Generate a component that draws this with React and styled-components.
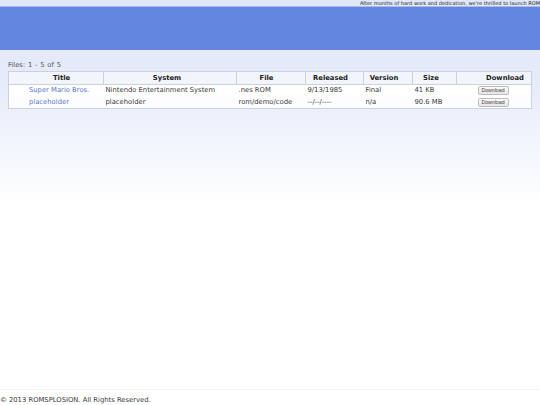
import React from "react";
import styled, { createGlobalStyle } from "styled-components";

const Global = createGlobalStyle`
  html, body { margin: 0; padding: 0; background: #fff; }
  body { font-family: "DejaVu Sans", Verdana, sans-serif; color: #333; }
  #root { width: 540px; height: 405px; overflow: hidden; }
`;
const Page = styled.div`
  width: 540px; height: 405px; display: flex; flex-direction: column; overflow: hidden;
  background: linear-gradient(to bottom, #e0e7f8 0px, #e6ebfa 80px, #ffffff 205px, #ffffff 100%);
`;
const Ticker = styled.div`
  height: 6px; line-height: 6px; font-size: 5.05px; color: #222; white-space: nowrap;
  padding-left: 360px; flex: none;
`;
const Banner = styled.div`
  height: 43px; background: #6386e0; border-top: 1px solid #a9bbe9; flex: none;
`;
const Main = styled.main`
  flex: 1; padding: 11px 8px 0 8px;
`;
const Count = styled.div`
  font-size: 6.8px; word-spacing: 0.6px; line-height: 8px; color: #555; height: 10px;
`;
const Table = styled.table`
  border-collapse: collapse; table-layout: fixed; width: 523px;
  border: 1px solid #ccd1dd; font-size: 6.8px;
`;
const Head = styled.th`
  height: 12px; padding: 0 ${p => (p.$shift < 0 ? -p.$shift : 0)}px 0 ${p => (p.$shift > 0 ? p.$shift : 0)}px;
  font-size: 6.8px; font-weight: 700; color: #222;
  text-align: center; background: #f3f5fc; border: 1px solid #ccd1dd; line-height: 12px;
`;
const Row = styled.tr`
  background: ${p => (p.$alt ? "#fdfdff" : "#ffffff")};
  height: ${p => (p.$alt ? 11 : 12)}px;
`;
const Cell = styled.td`
  padding: 0 0 0 ${p => p.$pad ?? 2}px; color: #3a3a3a; white-space: nowrap; line-height: 11px;
`;
const TitleLink = styled.a`
  color: #5c78c8; text-decoration: none; padding-left: 20px;
`;
const Btn = styled.button`
  display: block; width: 31px; height: 9px; padding: 0; margin: 0 0 0 21px;
  font-family: "Liberation Sans", Arial, sans-serif; font-size: 5.2px; line-height: 7px; color: #444;
  background: linear-gradient(#fafafa, #e6e6e6); border: 1px solid #bdbdbd; border-radius: 2px;
`;
const Footer = styled.footer`
  height: 15px; border-top: 1px solid #f3f3f3; font-size: 6.8px; line-height: 20px; color: #3a3a3a;
  flex: none; white-space: nowrap;
`;

const cols = [95, 133, 69, 58, 49, 44, 75];
const heads = [
  { label: "Title", shift: 11 },
  { label: "System", shift: -6 },
  { label: "File", shift: -9 },
  { label: "Released", shift: -8 },
  { label: "Version", shift: -8 },
  { label: "Size", shift: -7 },
  { label: "Download", shift: 22 },
];
const rows = [
  ["Super Mario Bros.", "Nintendo Entertainment System", ".nes ROM", "9/13/1985", "Final", "41 KB"],
  ["placeholder", "placeholder", "rom/demo/code", "--/--/----", "n/a", "90.6 MB"],
];

export default function App() {
  return (
    <Page>
      <Global />
      <Ticker>After months of hard work and dedication, we're thrilled to launch ROM</Ticker>
      <Banner />
      <Main>
        <Count>Files: 1 - 5 of 5</Count>
        <Table>
          <colgroup>{cols.map((w, i) => <col key={i} style={{ width: w }} />)}</colgroup>
          <thead>
            <tr>{heads.map(h => <Head key={h.label} $shift={h.shift}>{h.label}</Head>)}</tr>
          </thead>
          <tbody>
            {rows.map((r, i) => (
              <Row key={i} $alt={i === 1}>
                <Cell $pad={0}><TitleLink href="#">{r[0]}</TitleLink></Cell>
                {r.slice(1).map((c, j) => <Cell key={j}>{c}</Cell>)}
                <Cell $pad={0}><Btn>Download</Btn></Cell>
              </Row>
            ))}
          </tbody>
        </Table>
      </Main>
      <Footer>© 2013 ROMSPLOSION. All Rights Reserved.</Footer>
    </Page>
  );
}
